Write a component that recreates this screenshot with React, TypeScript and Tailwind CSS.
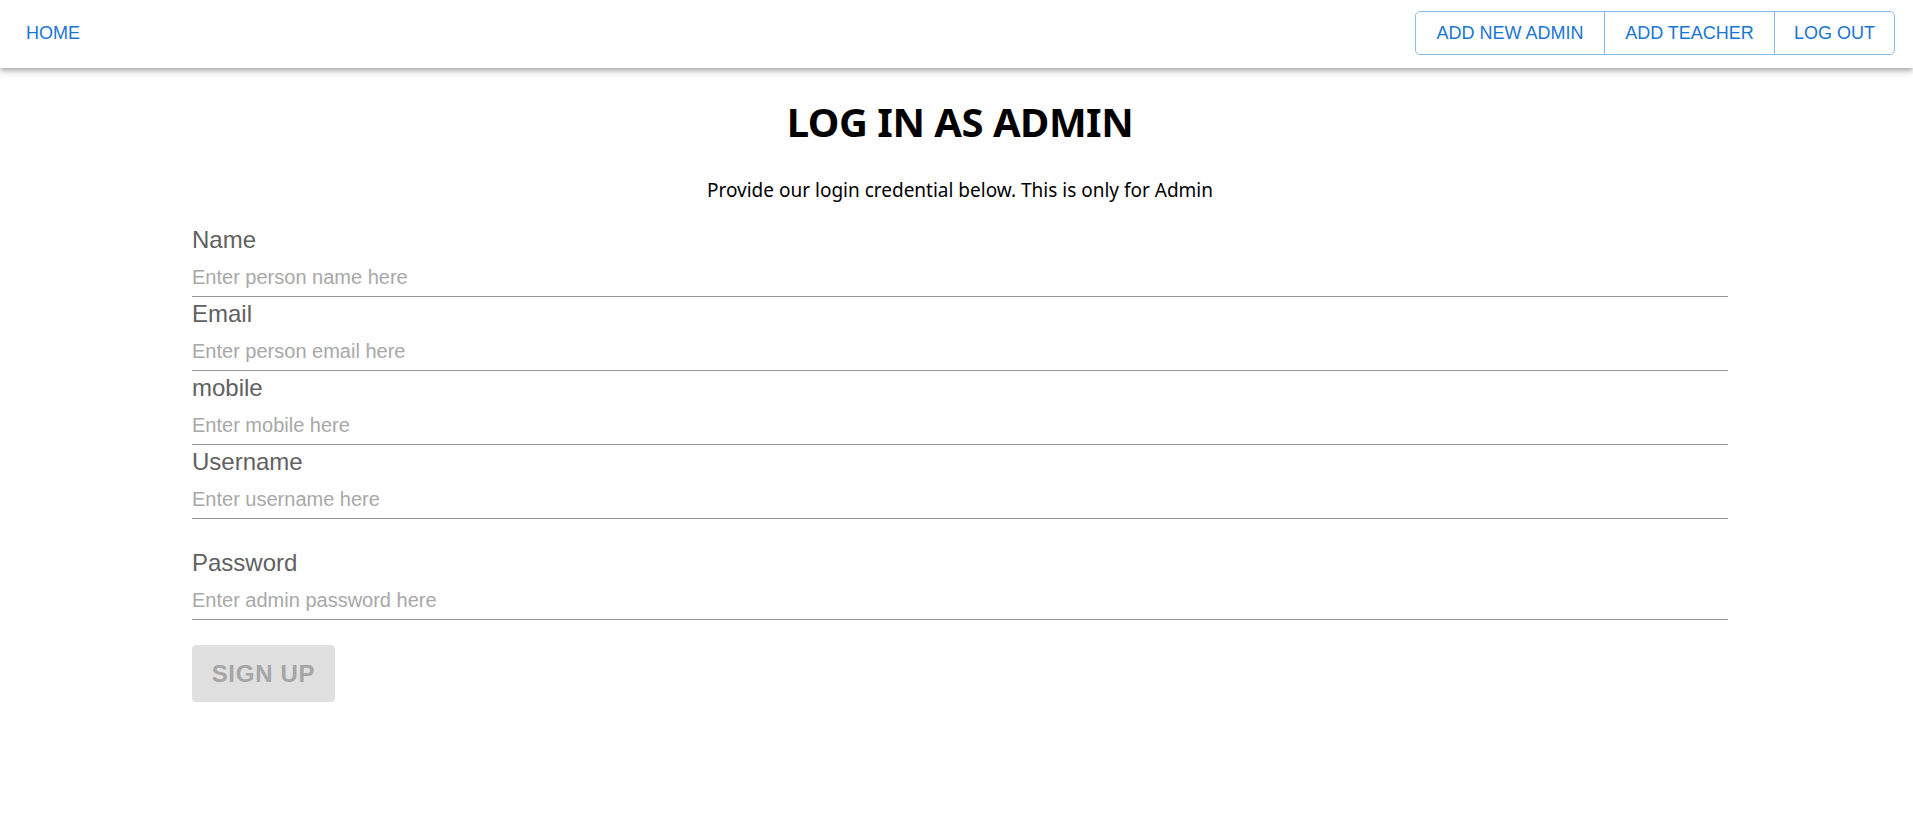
import React from 'react';

const FIELDS = [
  { label: 'Name', placeholder: 'Enter person name here', type: 'text' },
  { label: 'Email', placeholder: 'Enter person email here', type: 'email' },
  { label: 'mobile', placeholder: 'Enter mobile here', type: 'text' },
  { label: 'Username', placeholder: 'Enter username here', type: 'text' },
];

const Field: React.FC<{ label: string; placeholder: string; type: string; className?: string }> = ({
  label,
  placeholder,
  type,
  className = '',
}) => (
  <div className={`flex flex-col ${className}`}>
    <label className="mt-[2px] text-[24px] leading-[30px] text-[#616161]">{label}</label>
    <input
      type={type}
      placeholder={placeholder}
      className="h-[42px] w-full border-b border-[#949494] bg-transparent pt-[3px] text-[20px] text-[#333] outline-none placeholder:text-[#a8a8a8]"
    />
  </div>
);

export default function App() {
  return (
    <div className="min-h-[836px] bg-white font-['Liberation_Sans',Arial,sans-serif]">
      <header className="relative z-10 flex h-[68px] items-center justify-between bg-white pb-[2px] pl-[16px] pr-[18px] shadow-[0px_2px_4px_-1px_rgba(0,0,0,0.2),0px_4px_5px_0px_rgba(0,0,0,0.14),0px_1px_10px_0px_rgba(0,0,0,0.12)]">
        <button className="px-[10px] py-[6px] text-[18px] uppercase text-[#1976d2]">Home</button>
        <div className="flex h-[44px] rounded-[5px] border border-[#8cbae8]">
          <button className="w-[188px] text-[18px] uppercase text-[#1976d2]">Add new admin</button>
          <button className="w-[170px] border-l border-[#8cbae8] text-[18px] uppercase text-[#1976d2]">
            Add teacher
          </button>
          <button className="w-[120px] border-l border-[#8cbae8] text-[18px] uppercase text-[#1976d2]">
            Log out
          </button>
        </div>
      </header>

      <main className="ml-[192px] w-[1536px]">
        <div className="flex flex-col items-center font-['Noto_Sans',sans-serif] text-black">
          <h1 className="mt-[28px] text-[40px] font-bold leading-[52px] tracking-[-0.5px]">LOG IN AS ADMIN</h1>
          <p className="mt-[30px] text-[19px] leading-[24px]">
            Provide our login credential below. This is only for Admin
          </p>
        </div>

        <form className="mt-[21px] flex flex-col" onSubmit={(e) => e.preventDefault()}>
          {FIELDS.map((f) => (
            <Field key={f.label} {...f} />
          ))}
          <Field label="Password" placeholder="Enter admin password here" type="password" className="mt-[27px]" />
          <div className="mt-[25px]">
            <button
              type="submit"
              disabled
              className="h-[57px] w-[143px] rounded-[4px] bg-[#e0e0e0] text-[24px] font-bold tracking-[0.03em] text-[#a6a6a6]"
            >
              SIGN UP
            </button>
          </div>
        </form>
      </main>
    </div>
  );
}
